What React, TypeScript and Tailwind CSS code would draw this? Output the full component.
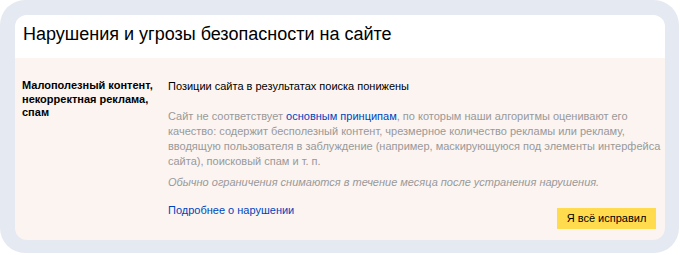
import React from "react";

export default function App() {
  return (
    <div className="w-[680px] h-[255px] bg-white" style={{ fontFamily: "Arial, 'Liberation Sans', sans-serif" }}>
      <div className="w-[679px] h-[253px] bg-[#e5e9f1] rounded-[25px] pt-[15px] pl-[15px] pr-[14px] pb-[13px]">
        <div className="w-full h-full rounded-[12px] overflow-hidden flex flex-col bg-[#fbf4f1]">
          <div className="bg-white h-[43px] pl-[8px] pt-[8px] shrink-0">
            <h1 className="text-[18px] leading-[22px] text-black">Нарушения и угрозы безопасности на сайте</h1>
          </div>
          <div className="flex flex-1 pt-[21px] pl-[7px] pr-[9px]">
            <div className="w-[146px] shrink-0 text-[11px] leading-[13.5px] font-bold text-black">
              Малополезный контент, некорректная реклама, спам
            </div>
            <div className="flex-1 min-w-0 flex flex-col text-[11px]">
              <div className="leading-[14px] text-black">Позиции сайта в результатах поиска понижены</div>
              <p className="mt-[16px] leading-[15px] text-[#999999] mr-[-8px]">
                Сайт не соответствует <span className="text-[#0044bb]">основным принципам</span>, по которым наши алгоритмы оценивают его качество: содержит бесполезный контент, чрезмерное количество рекламы или рекламу, вводящую пользователя в заблуждение (например, маскирующуюся под элементы интерфейса сайта), поисковый спам и т. п.
              </p>
              <p className="mt-[6px] leading-[15px] italic text-[#999999]">
                Обычно ограничения снимаются в течение месяца после устранения нарушения.
              </p>
              <div className="flex items-start justify-between mt-[13px]">
                <span className="text-[#0044bb] leading-[15px]">Подробнее о нарушении</span>
                <button className="bg-[#ffdb4d] h-[21px] w-[99px] mt-[5px] text-[11px] text-black leading-[21px]">Я всё исправил</button>
              </div>
            </div>
          </div>
        </div>
      </div>
    </div>
  );
}
